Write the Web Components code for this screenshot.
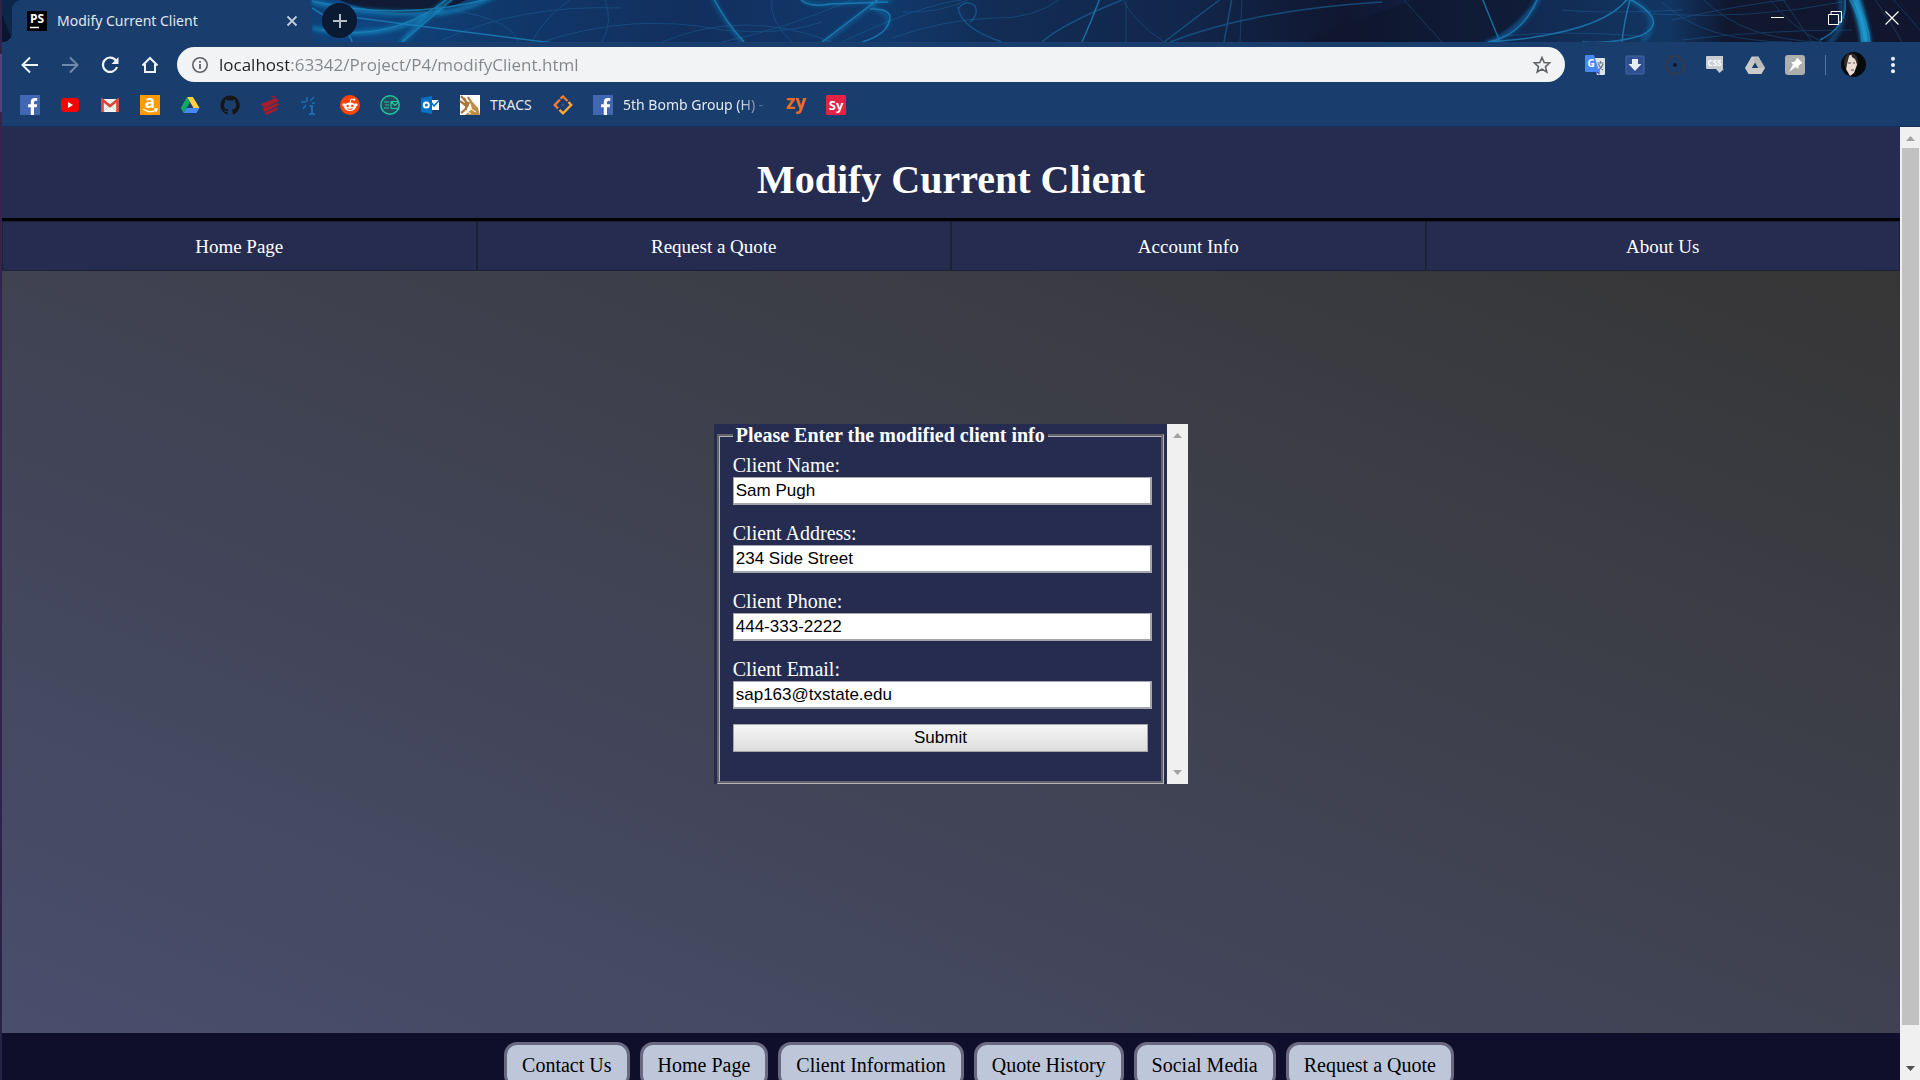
<!DOCTYPE html>
<html lang="en">
<head>
<meta charset="utf-8">
<title>Modify Current Client</title>
<style>
html, body { height: 100%; }
body { margin: 0; overflow: hidden; background: #262c4f; }
</style>
</head>
<body>
<browser-window>
  <tab-strip slot="chrome">Modify Current Client</tab-strip>
  <tool-bar slot="chrome" url="localhost:63342/Project/P4/modifyClient.html"></tool-bar>
  <bookmark-bar slot="chrome"></bookmark-bar>
  <page-header>Modify Current Client</page-header>
  <page-nav></page-nav>
  <page-main>
    <client-form heading="Please Enter the modified client info">
      <form-field label="Client Name:" value="Sam Pugh"></form-field>
      <form-field label="Client Address:" value="234 Side Street"></form-field>
      <form-field label="Client Phone:" type="tel" value="444-333-2222"></form-field>
      <form-field label="Client Email:" type="email" value="sap163@txstate.edu"></form-field>
    </client-form>
  </page-main>
  <page-footer>
    <footer-button>Contact Us</footer-button>
    <footer-button>Home Page</footer-button>
    <footer-button>Client Information</footer-button>
    <footer-button>Quote History</footer-button>
    <footer-button>Social Media</footer-button>
    <footer-button>Request a Quote</footer-button>
  </page-footer>
</browser-window>

<script>
const UI = '"Noto Sans", "Open Sans", sans-serif';
const SERIF = '"Liberation Serif", serif';

function define(name, render) {
  customElements.define(name, class extends HTMLElement {
    connectedCallback() {
      if (this.shadowRoot) return;
      this.attachShadow({ mode: 'open' }).innerHTML = '<style>:host,*{box-sizing:border-box}</style>' + render(this);
    }
  });
}

const svg = (size, body, box = 20) =>
  `<svg width="${size}" height="${size}" viewBox="0 0 ${box === 20 ? size === 25 ? 25 : 20 : box} ${box === 20 ? size === 25 ? 25 : 20 : box}" fill="none" aria-hidden="true">${body}</svg>`;

/* window frame: left edge, browser chrome, page with its scroll bar */
define('browser-window', () => `
<style>
:host { display: grid; grid-template-columns: 2px minmax(0, 1fr); height: 100vh; overflow: hidden; }
.edge { background: linear-gradient(#2f2448 0 54px, #5b4080 54px 112px, #35254d 112px 60%, #242344 100%); }
.window { display: flex; flex-direction: column; min-height: 0; min-width: 0; }
.chrome { flex: none; background: #193d6c; border-bottom: 1px solid #162f55; }
.view { flex: 1; display: flex; min-height: 0; }
.page { flex: 1; display: flex; flex-direction: column; min-width: 0; overflow: hidden; }
</style>
<div class="edge"></div>
<div class="window">
  <div class="chrome"><slot name="chrome"></slot></div>
  <div class="view"><div class="page"><slot></slot></div><scroll-bar thumb></scroll-bar></div>
</div>`);

define('scroll-bar', () => `
<style>
:host { display: flex; flex-direction: column; align-items: center; flex: none; width: 20px; background: #f0f0f0; }
:host(:not([thumb])) { width: 21px; }
svg { flex: none; display: block; }
.track { flex: 1; align-self: stretch; padding: 0 1px 34px 2px; display: flex; }
.thumb { flex: 1; background: #c1c1c1; }
:host(:not([thumb])) .thumb { background: none; }
path { fill: #a3a3a3; }
:host([thumb]) .down path { fill: #505050; }
</style>
<svg width="21" height="21" viewBox="0 0 21 21"><path d="M10.500 9 L15 14 H6 Z"/></svg>
<div class="track"><div class="thumb"></div></div>
<svg class="down" width="21" height="21" viewBox="0 0 21 21"><path d="M6 7 H15 L10.500 12 Z"/></svg>`);

define('tab-strip', () => `
<style>
:host { display: flex; position: relative; height: 42px; padding-left: 10px; font: 14px/34px ${UI}; color: #e1e6ee; overflow: hidden; }
.art { position: absolute; inset: 0; width: 100%; height: 100%; }
.tab { position: relative; display: flex; align-items: center; width: 300px; height: 42px; padding: 0 13px 0 15px; background: #193d6c; border-radius: 9px 9px 0 0; }
.tab::before, .tab::after { content: ""; position: absolute; bottom: 0; width: 9px; height: 9px; }
.tab::before { left: -9px; background: radial-gradient(circle at 0 0, transparent 9px, #193d6c 9px); }
.tab::after { right: -9px; background: radial-gradient(circle at 100% 0, transparent 9px, #193d6c 9px); }
.title { flex: 1; padding-left: 10px; white-space: nowrap; }
button { position: relative; display: grid; place-items: center; padding: 0; border: 0; background: none; }
.tab button { width: 14px; height: 14px; }
.new { width: 35px; height: 35px; margin: 3px 0 0 10px; border-radius: 50%; background: #0b1a33; }
.controls { position: relative; display: flex; margin-left: auto; height: 36px; }
.controls button { width: 57px; }
svg { display: block; }
</style>
<svg class="art" viewBox="0 0 1918 42" preserveAspectRatio="none" fill="none" aria-hidden="true">
  <defs>
    <linearGradient id="sky"><stop offset="0" stop-color="#0c2647"/><stop offset=".19" stop-color="#104480"/><stop offset=".26" stop-color="#10386a"/><stop offset=".36" stop-color="#122f5e"/><stop offset=".46" stop-color="#11396c"/><stop offset=".52" stop-color="#122c54"/><stop offset=".62" stop-color="#12264b"/><stop offset=".7" stop-color="#10162f"/><stop offset=".76" stop-color="#11244a"/><stop offset=".87" stop-color="#123662"/><stop offset=".9" stop-color="#10172f"/><stop offset="1" stop-color="#11162e"/></linearGradient>
    <filter id="soft" x="-10%" y="-50%" width="120%" height="200%"><feGaussianBlur stdDeviation="2"/></filter>
    <filter id="thin" x="-10%" y="-50%" width="120%" height="200%"><feGaussianBlur stdDeviation=".6"/></filter>
  </defs>
  <rect width="1918" height="42" fill="url(#sky)"/>
  <path d="M338 0 H464 C450 8 425 13 398 13 Q360 11 338 0" fill="#101a35"/>
  <path d="M0 14 L10 40 V42 H0Z" fill="#0b1430"/>
  <path d="M1410 0 H1534 Q1512 30 1480 42 H1300Z" fill="#10172e" opacity=".7"/>
  <g filter="url(#soft)">
    <path d="M310 2 Q370 16 440 13 Q470 8 492 -4M310 28 Q380 44 440 8M398 44 Q420 20 450 -4" stroke="#1591c8" stroke-width="4" opacity=".75"/>
    <path d="M710 -4 Q722 22 742 44M820 44 L882 -4M800 -2 Q806 6 826 4 L890 0M870 8 Q892 14 884 28" stroke="#1584bd" stroke-width="3" opacity=".6"/>
    <path d="M1852 -4 Q1862 22 1864 44" stroke="#1d9ed6" stroke-width="9"/>
    <path d="M1838 -4 Q1846 26 1826 44M1538 -4 Q1518 34 1484 44 M1624 -2 Q1665 16 1640 42" stroke="#166ba5" stroke-width="5" opacity=".6"/>
  </g>
  <g stroke="#1c87bf" stroke-width="1.500" opacity=".75" filter="url(#thin)">
    <path d="M310 1 Q400 22 490 -2M320 30 Q390 42 444 0M400 42 L452 -2M350 17 Q430 28 560 44M310 8 Q350 32 350 42"/>
    <path d="M712 -1 Q724 22 742 42M820 42 L878 -2M798 -1 Q806 8 828 4 L886 2M868 9 Q886 8 888 16 Q888 34 860 42"/>
    <path d="M1080 42 Q1090 20 1098 -2M1480 -2 L1498 42M1536 -2 Q1520 36 1486 42Q1600 34 1626 -2Q1670 22 1638 36 Q1610 44 1580 42M1628 0 Q1622 22 1620 42"/>
    <path d="M1852 -2 Q1866 20 1868 42M1847 -2 Q1860 20 1860 42M1843 0 Q1846 26 1818 40"/>
  </g>
  <g stroke="#1c78b5" stroke-width="1.500" opacity=".5" filter="url(#thin)">
    <path d="M956 9 Q964 -2 973 6 Q977 14 968 22M956 7 Q958 28 1000 42M1040 42 Q1060 24 1120 0M1168 42 Q1250 10 1380 2M1162 42 L1220 -2M1222 42 L1230 -2"/>
  </g>
  <g stroke="#2378b5" stroke-width="1" opacity=".35" filter="url(#thin)">
    <path d="M450 10 Q510 20 516 42M530 42 Q540 20 570 -2M440 40 Q520 4 620 8M540 42 Q630 12 720 30 Q780 36 820 22M600 42 Q612 20 602 -2M660 42 Q742 8 830 42M720 42 Q780 30 850 0M770 -2 Q766 20 790 42M840 42 Q920 4 960 0M890 38 Q940 20 990 18 Q1030 20 1060 -2M900 12 Q938 14 970 -2M1120 -2 Q1130 20 1162 42M1240 -2 L1238 42M1124 42 V0"/>
    <path d="M1660 2 Q1700 42 1790 42M1670 20 Q1740 4 1800 -2M1680 40 Q1760 30 1850 30M1700 -2 Q1740 40 1820 42M1768 0 Q1790 28 1820 42M1780 -2 L1810 42M1650 14 Q1750 20 1840 2M1500 36 Q1560 30 1640 36M1560 10 Q1600 14 1680 10M1872 -2 Q1890 24 1900 42M1890 -2 L1918 30M1400 -2 L1440 42"/>
  </g>
</svg>
<div class="tab">
  ${svg(20, '<path d="M0 0H20V20H0Z" fill="#000"/><text x="10" y="12" text-anchor="middle" font-family="Open Sans, sans-serif" font-size="12" font-weight="700" fill="#fff">PS</text><path d="M3 16.500H12" stroke="#fff" stroke-width="1.500"/>')}
  <span class="title"><slot></slot></span>
  <button aria-label="Close tab">${svg(12, '<path d="M1.500 1.500 10.500 10.500M10.500 1.500 1.500 10.500" stroke="#c3cedc" stroke-width="1.800"/>', 12)}</button>
</div>
<button class="new" aria-label="New tab">${svg(16, '<path d="M8 1V15M1 8H15" stroke="#b4bcc8" stroke-width="2"/>', 16)}</button>
<div class="controls">
  <button aria-label="Minimize">${svg(14, '<path d="M0 6.500H13" stroke="#fff"/>', 14)}</button>
  <button aria-label="Restore">${svg(14, '<path d="M.5 3.500H10.500V13.500H.5ZM3 3V.5H13.500V11H11" stroke="#fff"/>', 14)}</button>
  <button aria-label="Close">${svg(14, '<path d="M.5 .5 13.500 13.500M13.500 .5 .5 13.500" stroke="#fff" stroke-width="1.200"/>', 14)}</button>
</div>`);

define('tool-bar', el => `
<style>
:host { display: flex; align-items: center; height: 45px; padding: 0 7px 0 8px; }
button { flex: none; display: grid; place-items: center; width: 40px; height: 35px; padding: 0; border: 0; background: none; }
svg { display: block; flex: none; }
.box { flex: 1; display: flex; align-items: center; height: 35px; margin: 0 10px 0 7px; padding: 0 3px 0 14px; border-radius: 18px; background: #f1f3f4; }
input { flex: 1; min-width: 0; height: 30px; margin-left: 10px; padding: 0; border: 0; outline: 0; font: 17px/24px "Open Sans", sans-serif;
  background: linear-gradient(90deg, #202124 70px, #80868b 70px); -webkit-background-clip: text; background-clip: text; -webkit-text-fill-color: transparent; }
.rule { width: 1px; height: 20px; margin: 0 7px 0 10px; background: #5576a0; }
.menu { width: 40px; }
</style>
<button aria-label="Back">${svg(20, '<path d="M18 10H3M10 2.500 2.500 10 10 17.500" stroke="#eef3f9" stroke-width="2"/>')}</button>
<button aria-label="Forward">${svg(20, '<path d="M2 10H17M10 2.500 17.500 10 10 17.500" stroke="#7189a8" stroke-width="2"/>')}</button>
<button aria-label="Reload">${svg(20, '<path d="M16 5.500A7.200 7.200 0 1 0 17 12" stroke="#eef3f9" stroke-width="2.200"/><path d="M18.500 2V9H11.500Z" fill="#eef3f9"/>')}</button>
<button aria-label="Home">${svg(20, '<path d="M2.500 10.500 10 3 17.500 10.500M5 9V17H15V9" stroke="#eef3f9" stroke-width="2"/>')}</button>
<div class="box">
  ${svg(18, '<circle cx="9" cy="9" r="7.200" stroke="#5f6368" stroke-width="1.600"/><path d="M9 8V13M9 5V6.800" stroke="#5f6368" stroke-width="1.800"/>', 18)}
  <input type="text" aria-label="Address" value="${el.getAttribute('url')}">
  <button aria-label="Bookmark this page">${svg(20, '<path d="M10 2.500 12.200 7.500 17.600 8 13.500 11.600 14.800 17 10 14.100 5.200 17 6.500 11.600 2.400 8 7.800 7.500Z" stroke="#5f6368" stroke-width="1.600"/>')}</button>
</div>
<button aria-label="Translate">${svg(20, '<path d="M8 3H19Q20 3 20 4V19Q20 20 19 20H12Z" fill="#dfe3e8"/><path d="M11 17 14.500 14V20Z" fill="#394bb5"/><path d="M12.500 8H18.500M15.500 6V8M13.500 9Q15 13 18 15M18 9Q17 13 13.500 15" stroke="#60768d" stroke-width="1.200"/><path d="M1 0H9L14.500 17H1Q0 17 0 16V1Q0 0 1 0Z" fill="#4688f4"/><text x="6" y="12" text-anchor="middle" font-family="Open Sans, sans-serif" font-size="10" font-weight="700" fill="#fff">G</text>')}</button>
<button aria-label="Downloader">${svg(20, '<rect x="1" y="1" width="18" height="18" rx="1" fill="#2e4f91" stroke="#4566a5"/><path d="M7 4H13V9H16.500L10 16 3.500 9H7Z" fill="#e6ebf4"/>')}</button>
<button aria-label="Focus">${svg(20, '<circle cx="10" cy="10" r="9" stroke="#343b4a" stroke-width="2"/><circle cx="10" cy="10" r="2" fill="#101828"/>')}</button>
<button aria-label="CSS viewer">${svg(20, '<path d="M2 1H18V14H19L14.500 18 11 14H2Q1 14 1 13V2Q1 1 2 1Z" fill="#c9ccd1"/><text x="9.500" y="11" text-anchor="middle" font-family="Open Sans, sans-serif" font-size="8" font-weight="700" fill="#fff">CSS</text>')}</button>
<button aria-label="Drive">${svg(20, '<path d="M6.700 1.500H13.300L20 13 16.500 19H3.500L0 13Z" fill="#cacaca"/><path d="M13.300 1.500 20 13H13L8 4Z" fill="#bababa"/><path d="M10 7.500 13.200 13H6.800Z" fill="#193d6c"/>')}</button>
<button aria-label="Pin">${svg(20, '<rect width="20" height="20" rx="3" fill="#aeaeae"/><path d="M12 2.500 17.500 8 15.500 9 13.500 11V14L10.500 12 4 17 8 9.500 6 7H9L11 5Z" fill="#fff"/>')}</button>
<div class="rule"></div>
<button aria-label="Profile">${svg(25, '<circle cx="12.500" cy="12.500" r="12.500" fill="#080b0d"/><path d="M6 5Q11 0 15 5L16 13 13 21 9 24 5 17Z" fill="#eadbd3"/><path d="M3 12Q3 3 9 1L7 8 5 17ZM10 1Q18 2 17 14L14 7 11 5Z" fill="#302a28"/><path d="M7 11H10M12 11H14M10 18H13" stroke="#69504b"/>')}</button>
<button class="menu" aria-label="Menu">${svg(20, '<circle cx="10" cy="3.800" r="2" fill="#eef3f9"/><circle cx="10" cy="10" r="2" fill="#eef3f9"/><circle cx="10" cy="16.200" r="2" fill="#eef3f9"/>')}</button>`);

const FB = '<path d="M0 0H20V20H0Z" fill="#4267b2"/><path d="M14 20V12.300H16.700L17.100 9.200H14V7.300Q14 5.800 15.600 5.800H17.200V3.100Q16.500 3 14.900 3Q10.800 3 10.800 7V9.200H8.100V12.300H10.800V20Z" fill="#fff"/>';
const BOOKMARKS = [
  ['Facebook', FB],
  ['YouTube', '<rect x="1" y="3" width="18" height="14" rx="3.500" fill="#f00"/><path d="M8 7V13L13 10Z" fill="#fff"/>'],
  ['Gmail', '<path d="M1.500 4H18.500V17H1.500Z" fill="#f2f2f2"/><path d="M4 16 10 10 16 16" stroke="#d0d0d0"/><path d="M2.500 17V5L10 11 17.500 5V17" stroke="#dc4437" stroke-width="2.600"/>'],
  ['Amazon', '<path d="M0 0H20V20H0Z" fill="#ff9900"/><text x="10" y="12.500" text-anchor="middle" font-family="Open Sans, sans-serif" font-size="17" font-weight="700" fill="#fff">a</text><path d="M3 14Q10 19 16 15M14 14H17L16 17" stroke="#fff" stroke-width="1.400"/>'],
  ['Drive', '<path d="M7 2H13L19.500 13H13.500Z" fill="#ffcf48"/><path d="M7 2 10 7.200 3.700 18 .7 13Z" fill="#11a861"/><path d="M6.700 13H19.500L16.500 18H3.700Z" fill="#4688f4"/>'],
  ['GitHub', '<path d="M10 .5A9.700 9.700 0 0 0 7 19.400C7.500 19.500 7.600 19.200 7.600 19V17C5 17.500 4.400 15.900 4.300 15.500 4 15 3.500 14.500 3 14.200 4.500 13.800 5 15.300 5.500 15.800 6.200 16.500 7.300 16.300 7.700 16 7.800 15.300 8 15 8.300 14.700 5.800 14.400 4 13.500 4 10 4 8.900 4.400 8 5 7.300 4.800 6.500 4.900 5.500 5.200 4.500 6 4.400 7 5 7.900 5.600Q10 5 12.300 5.600C13.500 4.800 14.300 4.400 15 4.500 15.400 5.500 15.300 6.500 15.200 7.300 16 8.300 16.200 9.200 16.200 10 16 13.500 14 14.400 11.900 14.700 12.300 15 12.600 15.800 12.600 16.500V19C12.600 19.300 12.800 19.500 13.200 19.400A9.700 9.700 0 0 0 10 .5Z" fill="#171515"/>'],
  ['Texas State', '<path d="M1 9 16 3 19 6 4 13ZM2 14 18 8 19 10 5 17ZM4 18 18 12 17 15 7 20Z" fill="#a61d2c"/><path d="M11 1Q13 0 13.500 2Q15 0 16 1L14 4Z" fill="#a61d2c"/>'],
  ['Star one', '<path d="M7 2V7M1 7H6M3 14 6 10M10 6 14 2M12 8H15" stroke="#1b6cb8" stroke-width="1.500"/><path d="M9.500 11H12V19M9 19H15" stroke="#1b6cb8" stroke-width="2"/>'],
  ['Reddit', '<circle cx="10" cy="10" r="10" fill="#ff4500"/><ellipse cx="10" cy="11.800" rx="6" ry="4.200" fill="#fff"/><circle cx="4" cy="9.800" r="1.600" fill="#fff"/><circle cx="16" cy="9.800" r="1.600" fill="#fff"/><path d="M10 8 11 4 14 4.500" stroke="#fff"/><circle cx="14.200" cy="4.600" r="1.200" fill="#fff"/><circle cx="7.700" cy="11" r="1.200" fill="#ff4500"/><circle cx="12.300" cy="11" r="1.200" fill="#ff4500"/><path d="M7.500 13.700Q10 15.200 12.500 13.700" stroke="#ff4500"/>'],
  ['Mail', '<circle cx="10" cy="10" r="9.200" fill="#254b60" stroke="#1fc9a0" stroke-width="1.400"/><path d="M4 7H9M5 10H9M4 13H9M11 6.500H18.500M11 13.500H18.500M11 6.500V13.500M11.500 7 15 10.500 18.500 7" stroke="#1fc9a0" stroke-width="1.200"/>'],
  ['Outlook', '<path d="M10 5H19V15H10Z" fill="#fff"/><path d="M11 7 14 11 19 5.500" stroke="#0072c6" stroke-width="1.500"/><path d="M1 3 12 1V19L1 17Z" fill="#0072c6"/><circle cx="6.300" cy="10" r="2.500" stroke="#fff" stroke-width="2"/>'],
  ['TRACS', '<path d="M0 0H20V20H0Z" fill="#fff"/><path d="M1 1 8 9M0 6 8 12M1 18Q7 14 9 7M4 3Q7 7 6 15M8 2 14 12" stroke="#a97838" stroke-width="2.200"/><path d="M9 3 18 13 20 20H5L12 14Z" fill="#c18b43"/><path d="M9 13 16 17M6 16 11 19" stroke="#f4e5c8" stroke-width="1.300"/>', 'TRACS'],
  ['Diamond', '<path d="M7 4.500 1.800 10 5 13.300" stroke="#f47b34" stroke-width="2.400"/><path d="M7.500 3.500 10 1.500 14.500 6" stroke="#f47b34" stroke-width="2.400"/><path d="M15.500 7 18.200 10 10 18.300 6.500 14.800" stroke="#fba93b" stroke-width="2.400"/><circle cx="10" cy="10" r="1.400" fill="#46536a"/>'],
  ['5th Bomb Group', FB, '5th Bomb Group (H) -'],
  ['zyBooks', '<text x="10" y="14" text-anchor="middle" font-family="Open Sans, sans-serif" font-size="19" font-weight="700" fill="#ee6b24">zy</text>'],
  ['Sy', '<rect width="20" height="20" rx="1" fill="#e32245"/><text x="10" y="15" text-anchor="middle" font-family="Open Sans, sans-serif" font-size="13" font-weight="700" fill="#fff">Sy</text>']
];

define('bookmark-bar', () => `
<style>
:host { display: block; height: 39px; padding: 8px 18px 0; }
nav { display: flex; gap: 20px; }
a { display: flex; align-items: center; gap: 10px; height: 20px; color: #e4e9f0; text-decoration: none; font: 14px/20px ${UI}; white-space: nowrap; }
svg { display: block; flex: none; overflow: visible; }
span { min-width: 43px; }
.long { width: 143px; -webkit-mask-image: linear-gradient(90deg, #000 115px, transparent 148px); mask-image: linear-gradient(90deg, #000 115px, transparent 148px); }
</style>
<nav aria-label="Bookmarks">${BOOKMARKS.map(([name, body, text]) =>
  `<a href="#" aria-label="${name}">${svg(20, body)}${text ? `<span class="${text.length > 10 ? 'long' : ''}">${text}</span>` : ''}</a>`).join('')}</nav>`);

define('page-header', () => `
<style>
:host { display: block; flex: none; padding: 30px 0 16px; background: #262c4f; border-bottom: 3px solid #000; }
h1 { margin: 0; font: bold 40px/45px ${SERIF}; color: #fff; text-align: center; }
</style>
<h1><slot></slot></h1>`);

define('page-nav', () => `
<style>
:host { display: block; flex: none; }
nav { display: flex; }
a { flex: 1; border: 1px solid #1b2233; background: #262c4f; color: #fff; font: 19px/22px ${SERIF}; padding: 14px 0 12px; text-align: center; text-decoration: none; }
</style>
<nav>${['Home Page', 'Request a Quote', 'Account Info', 'About Us'].map(t => `<a href="#">${t}</a>`).join('')}</nav>`);

define('page-main', () => `
<style>
:host { display: flex; flex: 1; justify-content: center; align-items: flex-start; min-height: 0; padding-top: 153px; background: linear-gradient(to top right, #494e6d, #363636); }
</style>
<slot></slot>`);

define('client-form', el => `
<style>
:host { display: flex; width: 25%; min-width: 340px; height: 360px; background: #262c4f; }
form { flex: 1; display: flex; padding: 0 3px; min-width: 0; }
fieldset { flex: 1; min-width: 0; margin: 0; padding: 7px 9px 0 13px; border: 3px groove #b4b4bc; color: #fff; }
legend { padding: 0 3px; font: bold 20px/23px ${SERIF}; white-space: nowrap; }
button { display: block; width: calc(100% - 4px); height: 28px; margin-top: -2px; padding: 0; border: 1px solid #a6a6a6; background: linear-gradient(#f6f6f6, #dddddd); font: 17px/20px "Liberation Sans", sans-serif; color: #000; }
</style>
<form>
  <fieldset><legend>${el.getAttribute('heading')}</legend><slot></slot><button type="button">Submit</button></fieldset>
</form>
<scroll-bar></scroll-bar>`);

define('form-field', el => `
<style>
:host { display: block; margin-bottom: 17px; }
label { display: block; font: 20px/23px ${SERIF}; color: #fff; }
input { display: block; width: 100%; height: 28px; margin: 0; padding: 0 2px; border: 1px solid #a5a5ad; border-right-width: 2px; border-bottom-width: 2px; outline: 0; background: #fff; color: #000; font: 17px/20px "Liberation Sans", sans-serif; }
</style>
<label for="f">${el.getAttribute('label')}</label>
<input id="f" type="${el.getAttribute('type') || 'text'}" value="${el.getAttribute('value')}">`);

define('page-footer', () => `
<style>
:host { display: flex; flex: none; justify-content: center; gap: 10px; height: 47px; padding: 9px 0 0 56px; overflow: hidden; background: #100f2b; }
</style>
<slot></slot>`);

define('footer-button', () => `
<style>
:host { display: block; flex: none; }
button { height: 46px; padding: 0 15px; border: 3px solid #6b6882; border-radius: 13px; background: #bec7da; color: #000; font: 20px/23px ${SERIF}; white-space: nowrap; }
</style>
<button type="button"><slot></slot></button>`);
</script>
</body>
</html>
